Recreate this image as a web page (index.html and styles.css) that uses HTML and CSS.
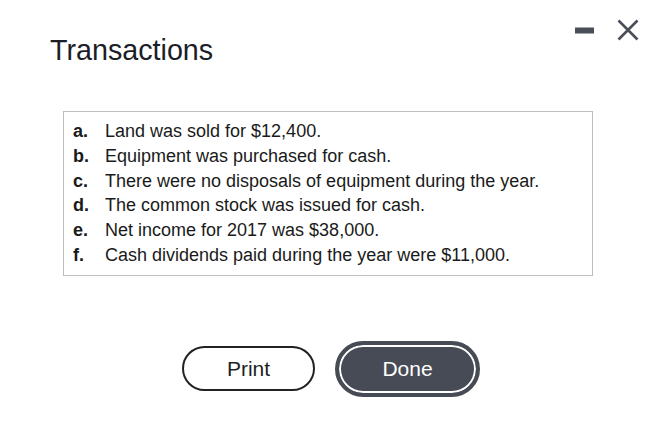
FILE: index.html
```html
<!DOCTYPE html>
<html>
<head>
<meta charset="utf-8">
<link rel="stylesheet" href="styles.css">
</head>
<body>
<div class="dialog">
  <div class="header">
    <h1 class="title">Transactions</h1>
    <div class="controls">
      <svg class="icon" viewBox="0 0 24 24" width="24" height="24"><rect x="2" y="9.5" width="19" height="6" fill="#4a4e58"/></svg>
      <svg class="icon" viewBox="0 0 24 24" width="24" height="24"><path d="M2.5 2.5 L21.5 21.5 M21.5 2.5 L2.5 21.5" stroke="#4a4e58" stroke-width="2.6" fill="none"/></svg>
    </div>
  </div>
  <div class="box">
    <div class="item"><span class="lbl">a.</span><span>Land was sold for $12,400.</span></div>
    <div class="item"><span class="lbl">b.</span><span>Equipment was purchased for cash.</span></div>
    <div class="item"><span class="lbl">c.</span><span>There were no disposals of equipment during the year.</span></div>
    <div class="item"><span class="lbl">d.</span><span>The common stock was issued for cash.</span></div>
    <div class="item"><span class="lbl">e.</span><span>Net income for 2017 was $38,000.</span></div>
    <div class="item"><span class="lbl">f.</span><span>Cash dividends paid during the year were $11,000.</span></div>
  </div>
  <div class="actions">
    <button class="btn print">Print</button>
    <button class="btn done">Done</button>
  </div>
</div>
</body>
</html>
```
FILE: styles.css
```css
html, body {
  margin: 0;
  padding: 0;
  background: #fff;
}
body {
  font-family: "Liberation Sans", Arial, sans-serif;
  color: #1a1a1a;
}
.dialog {
  width: 662px;
  height: 438px;
}
.header {
  display: flex;
  justify-content: space-between;
  align-items: flex-start;
  padding: 18px 22px 0 50px;
}
.title {
  margin: 16px 0 0 0;
  font-size: 28.7px;
  line-height: 32px;
  font-weight: normal;
  color: #1b1e28;
}
.controls {
  display: flex;
  gap: 19px;
}
.icon {
  display: block;
}
.box {
  margin: 45px 0 0 63px;
  width: 530px;
  box-sizing: border-box;
  border: 1px solid #bdbdbd;
  padding: 7px 9px;
  font-size: 18px;
  line-height: 24.8px;
}
.item {
  display: grid;
  grid-template-columns: 32px 1fr;
}
.lbl {
  font-weight: bold;
}
.actions {
  display: flex;
  justify-content: center;
  align-items: center;
  gap: 20px;
  margin-top: 65px;
}
.btn {
  font-family: "Liberation Sans", Arial, sans-serif;
  font-size: 21px;
  border-radius: 30px;
  box-sizing: border-box;
  padding: 0;
  cursor: pointer;
}
.print {
  width: 133px;
  height: 45px;
  background: #fff;
  border: 2px solid #222;
  color: #1f1f1f;
}
.done {
  width: 145px;
  height: 56px;
  background: #474b55;
  border: 4px solid #474b55;
  box-shadow: inset 0 0 0 2px #fff;
  color: #fff;
}
```
